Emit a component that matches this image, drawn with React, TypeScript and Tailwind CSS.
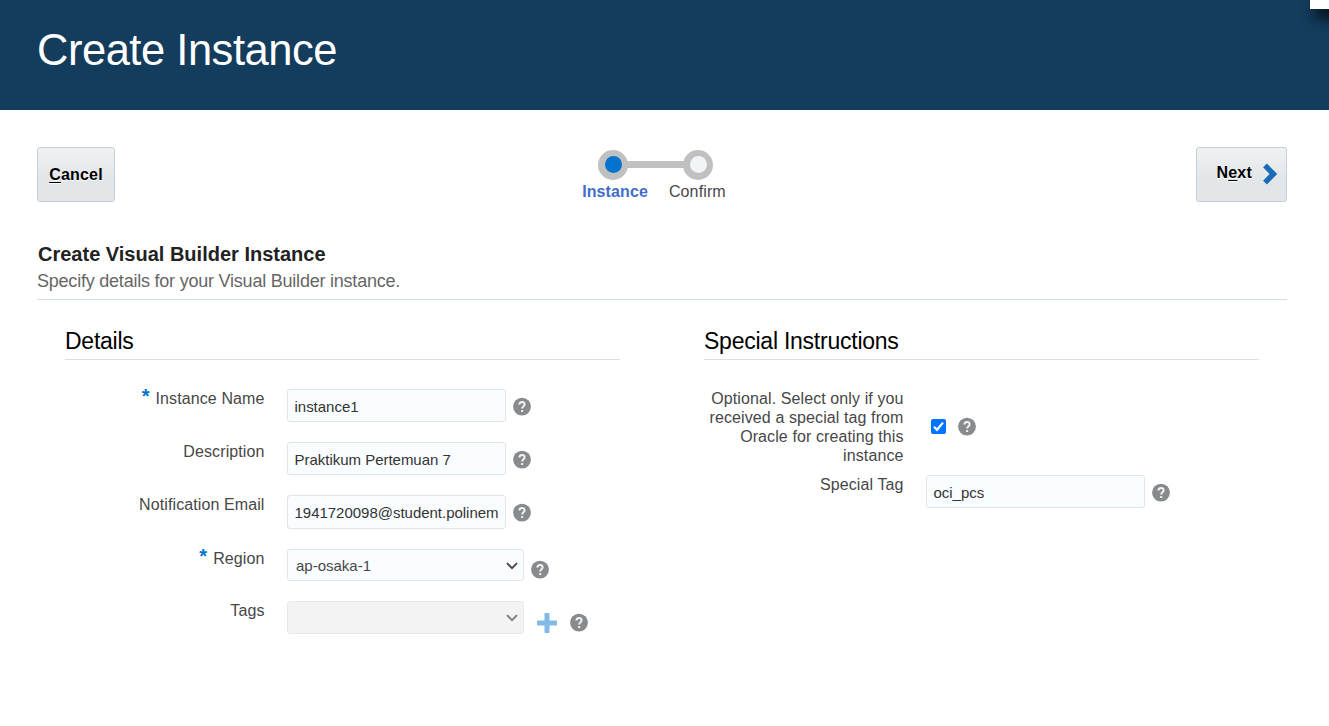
import type { ReactNode } from "react";

function HelpIcon({ className = "" }: { className?: string }) {
  return (
    <svg className={`h-[18px] w-[18px] shrink-0 overflow-visible ${className}`} viewBox="0 0 18 18" fill="none" aria-label="Help">
      <circle cx="9" cy="8.6" r="8.9" fill="#878b8d" />
      <path d="M6.4 6.6C6.4 4.9 7.4 4 9 4S11.6 4.9 11.6 6.4C11.6 8.3 9.2 8.4 9.2 10.6" stroke="#f1f2f2" strokeWidth="2" />
      <rect x="8.1" y="12" width="2.1" height="2.1" rx="0.6" fill="#f1f2f2" />
    </svg>
  );
}

function Chevron({ color }: { color: string }) {
  return (
    <svg className="h-[8px] w-[12px] shrink-0" viewBox="0 0 12 8" fill="none">
      <path d="M1 1.2L6 6.2L11 1.2" stroke={color} strokeWidth="1.9" />
    </svg>
  );
}

function Row({ label, required, className = "", children }: { label: string; required?: boolean; className?: string; children: ReactNode }) {
  return (
    <div className={`flex items-start ${className}`}>
      <div className="flex w-[200px] shrink-0 justify-end pr-[0.5px] text-right text-[16px] leading-[19px] tracking-[0.1px] text-[#474747]">
        {required && <span className="-mt-[3px] mr-[6px] text-[20px] leading-[20px] font-bold text-[#0572ce]">*</span>}
        <span>{label}</span>
      </div>
      <div className="ml-[22px] flex items-start">{children}</div>
    </div>
  );
}

function TextField({ value, className = "h-[33px]" }: { value: string; className?: string }) {
  return (
    <div className={`flex w-[219px] items-center overflow-hidden rounded-[3px] border border-[#dfe4e7] bg-[#fafdff] pt-[3px] pl-[6.5px] text-[15px] tracking-[-0.02px] whitespace-nowrap text-[#333333] ${className}`}>
      {value}
    </div>
  );
}

function Heading({ children }: { children: ReactNode }) {
  return (
    <h2 className="h-[33px] border-b border-[#d9dfe3] pt-px text-[23px] leading-[27px] tracking-[-0.24px] text-black">{children}</h2>
  );
}

export default function App() {
  return (
    <div className="h-[726px] w-[1329px] overflow-hidden bg-white font-['Liberation_Sans',Arial,sans-serif]">
      <header className="relative h-[110px] overflow-hidden bg-[#143c5c] pt-[25px] pl-[37px]">
        <h1 className="text-[43.5px] leading-[50px] tracking-[-0.48px] text-white">Create Instance</h1>
        <div className="absolute top-0 right-0 h-[9px] w-[19px] bg-white shadow-[8px_6px_14px_3px_rgba(0,0,0,0.8)]" />
      </header>

      <main className="pr-[42px] pl-[37px]">
        <div className="flex h-[129px] items-start justify-between pt-[37px]">
          <button className="h-[55px] w-[78px] rounded-[3px] border border-[#c4ced7] bg-linear-to-b from-[#f0f1f3] to-[#e2e6e9] to-60% text-[16px] font-bold tracking-[0.2px] text-black [text-shadow:0_1px_0_#fff]">
            <span className="underline underline-offset-2">C</span>ancel
          </button>

          <div className="-ml-[3px] flex flex-col pt-[3px]">
            <div className="flex items-center pl-[16px]">
              <span className="flex h-[30px] w-[30px] items-center justify-center rounded-full bg-[#c0c0c0] pb-px">
                <span className="h-[17px] w-[17px] rounded-full bg-[#0572ce]" />
              </span>
              <span className="-mx-px mb-[2px] h-[7px] w-[57px] bg-[#c0c0c0]" />
              <span className="flex h-[30px] w-[30px] items-center justify-center rounded-full bg-[#c0c0c0] pb-px">
                <span className="h-[17px] w-[17px] rounded-full bg-[#f2f4f7]" />
              </span>
            </div>
            <div className="mt-[2px] flex gap-[21px] text-[16px] leading-[19px]">
              <span className="font-bold tracking-[0.1px] text-[#426dca]">Instance</span>
              <span className="tracking-[0.13px] text-[#474747]">Confirm</span>
            </div>
          </div>

          <button className="flex h-[55px] w-[91px] items-center rounded-[3px] border border-[#c4ced7] bg-linear-to-b from-[#f0f1f3] to-[#e2e6e9] to-60% pl-[19.5px] text-[16px] font-bold tracking-[0.2px] text-black [text-shadow:0_1px_0_#fff]">
            <span className="-mt-[3px]">N<span className="underline underline-offset-2">e</span>xt</span>
            <svg className="-mt-[2px] ml-[10px] h-[22px] w-[15px]" viewBox="0 0 15 22" fill="none">
              <path d="M3 2.4L11.4 11L3 19.6" stroke="#1a6cb8" strokeWidth="5.4" />
            </svg>
          </button>
        </div>

        <section className="h-[61px] border-b border-[#d3dde4] pt-[4px]">
          <h2 className="pl-px text-[20px] leading-[23px] font-bold text-[#222222]">Create Visual Builder Instance</h2>
          <p className="mt-[5px] text-[18px] leading-[21px] tracking-[-0.22px] text-[#666666]">Specify details for your Visual Builder instance.</p>
        </section>

        <div className="flex gap-[84px] pt-[27px] pl-[28px]">
          <section className="w-[555px]">
            <Heading>Details</Heading>
            <div className="flex flex-col pt-[29px]">
              <Row label="Instance Name" required className="h-[53px]">
                <TextField value="instance1" />
                <HelpIcon className="mt-[9px] ml-[7px]" />
              </Row>
              <Row label="Description" className="h-[53px]">
                <TextField value="Praktikum Pertemuan 7" />
                <HelpIcon className="mt-[9px] ml-[7px]" />
              </Row>
              <Row label="Notification Email" className="h-[54px]">
                <TextField value="1941720098@student.polinem" className="h-[34px]" />
                <HelpIcon className="mt-[9px] ml-[7px]" />
              </Row>
              <Row label="Region" required className="h-[52px]">
                <div className="flex h-[32px] w-[237px] items-center justify-between rounded-[3px] border border-[#dfe4e7] bg-[#fafdff] pr-[5px] pl-[8px] text-[15px] text-[#474747]">
                  <span className="pt-[3px]">ap-osaka-1</span>
                  <span className="flex pt-[2px]">
                    <Chevron color="#474747" />
                  </span>
                </div>
                <HelpIcon className="mt-[12px] ml-[7px]" />
              </Row>
              <Row label="Tags" className="h-[53px]">
                <div className="flex h-[33px] w-[237px] items-center justify-end rounded-[3px] border border-[#e8e8e8] bg-[#f3f3f3] pr-[5px]">
                  <Chevron color="#7e7e7e" />
                </div>
                <svg className="mt-[12px] ml-[13px] h-[20px] w-[20px]" viewBox="0 0 20 20">
                  <rect x="0" y="7.5" width="20" height="5" rx="0.8" fill="#82b9e6" />
                  <rect x="7.5" y="0" width="5" height="20" rx="0.8" fill="#82b9e6" />
                </svg>
                <HelpIcon className="mt-[13px] ml-[13px]" />
              </Row>
            </div>
          </section>

          <section className="w-[555px]">
            <Heading>Special Instructions</Heading>
            <div className="flex flex-col pt-[29px]">
              <Row label="Optional. Select only if you received a special tag from Oracle for creating this instance" className="h-[86px]">
                <span className="mt-[30px] ml-[5px] flex h-[15px] w-[15px] items-center justify-center rounded-[2px] bg-[#0075ff]">
                  <svg className="h-[15px] w-[15px]" viewBox="0 0 15 15" fill="none">
                    <path d="M3 7.8L6 10.8L12 3.6" stroke="#fff" strokeWidth="2.2" />
                  </svg>
                </span>
                <HelpIcon className="mt-[29px] ml-[12px]" />
              </Row>
              <Row label="Special Tag" className="h-[53px]">
                <TextField value="oci_pcs" />
                <HelpIcon className="mt-[9px] ml-[7px]" />
              </Row>
            </div>
          </section>
        </div>
      </main>
    </div>
  );
}
